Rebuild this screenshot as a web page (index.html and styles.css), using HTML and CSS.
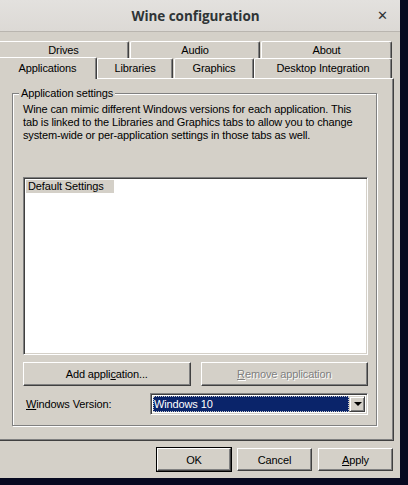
FILE: index.html
```html
<!DOCTYPE html>
<html>
<head>
<meta charset="utf-8">
<link rel="stylesheet" href="styles.css">
</head>
<body>
<div class="window">
  <div class="titlebar">
    <div class="spacer"></div>
    <div class="title">Wine configuration</div>
    <div class="spacer end"><span class="close">✕</span></div>
  </div>
  <div class="tabctl">
    <div class="tabrow row1">
      <div class="tab t-drives">Drives</div>
      <div class="tab t-audio">Audio</div>
      <div class="tab t-about">About</div>
    </div>
    <div class="tabrow row2">
      <div class="tab sel t-apps">Applications</div>
      <div class="tab t-libs">Libraries</div>
      <div class="tab t-gfx">Graphics</div>
      <div class="tab t-desk">Desktop Integration</div>
    </div>
    <div class="panel">
      <div class="group">
        <span class="legend">Application settings</span>
        <p class="desc">Wine can mimic different Windows versions for each application. This tab is linked to the Libraries and Graphics tabs to allow you to change system-wide or per-application settings in those tabs as well.</p>
        <div class="listbox">
          <div class="item">Default Settings</div>
        </div>
        <div class="btnrow">
          <div class="btn wide">Add appli<u>c</u>ation...</div>
          <div class="btn wide disabled"><span><u>R</u>emove application</span></div>
        </div>
        <div class="verrow">
          <span class="label"><u>W</u>indows Version:</span>
          <div class="combo">
            <div class="value"><span class="focus">Windows 10</span></div>
            <div class="drop"><span class="arrow"></span></div>
          </div>
        </div>
      </div>
    </div>
  </div>
  <div class="footer">
    <div class="btn ok">OK</div>
    <div class="btn">Cancel</div>
    <div class="btn"><u>A</u>pply</div>
  </div>
</div>
</body>
</html>
```
FILE: styles.css
```css
html, body {
  margin: 0;
  padding: 0;
}
body {
  width: 408px;
  height: 485px;
  overflow: hidden;
  background: #070920;
  font-family: "Liberation Sans", Arial, sans-serif;
  font-size: 11px;
  letter-spacing: -0.13px;
  color: #000;
}
.window {
  width: 400px;
  height: 478px;
  background: #d4d0c8;
  display: flex;
  flex-direction: column;
  overflow: hidden;
}
.titlebar {
  height: 31px;
  border-bottom: 1px solid #b9b5af;
  background: linear-gradient(#e3e1de, #dcd9d5);
  display: flex;
  align-items: center;
  padding-right: 9px;
  letter-spacing: 0;
}
.spacer {
  flex: 1;
  display: flex;
}
.spacer.end {
  justify-content: flex-end;
}
.title {
  font-family: "Open Sans", "Noto Sans", sans-serif;
  font-weight: bold;
  font-size: 13.5px;
  color: #2e3436;
  letter-spacing: -0.05px;
}
.close {
  font-family: "DejaVu Sans", sans-serif;
  font-weight: bold;
  font-size: 13px;
  color: #2e3436;
  margin-right: 3px;
}
.tabctl {
  margin-top: 9px;
  margin-left: -2px;
  width: 396px;
}
.tabrow {
  display: flex;
}
.row1 {
  height: 17px;
  gap: 1px;
}
.row2 {
  height: 20px;
  align-items: flex-end;
}
.tab {
  box-sizing: border-box;
  height: 17px;
  border-top: 1px solid #fff;
  border-left: 1px solid #fff;
  border-right: 1px solid #404040;
  box-shadow: inset -1px 0 #808080;
  border-radius: 2px 2px 0 0;
  display: flex;
  align-items: center;
  justify-content: center;
  padding-bottom: 1px;
}
.row2 .tab {
  height: 20px;
}
.tab.sel {
  height: 22px;
  margin-bottom: -1px;
  position: relative;
  z-index: 2;
  background: #d4d0c8;
  padding-bottom: 2px;
}
.t-drives { width: 131px; }
.t-audio { width: 130px; }
.t-about { width: 131px; }
.t-apps { width: 99px; }
.t-libs { width: 76px; margin-right: 1px; }
.t-gfx { width: 80px; }
.t-desk { width: 138px; }
.panel {
  box-sizing: border-box;
  height: 363px;
  border-top: 1px solid #fff;
  border-left: 1px solid #fff;
  border-right: 1px solid #404040;
  border-bottom: 1px solid #404040;
  box-shadow: inset -1px -1px #808080;
  padding: 14px 0 0 13px;
  position: relative;
  z-index: 1;
}
.group {
  box-sizing: border-box;
  width: 365px;
  height: 333px;
  border: 1px solid #808080;
  box-shadow: 1px 1px 0 #fff, inset 1px 1px 0 #fff;
  position: relative;
  padding: 9px 8px 0 10px;
}
.legend {
  position: absolute;
  left: 6px;
  top: -8px;
  background: #d4d0c8;
  padding: 0 2px;
  line-height: 14px;
}
.desc {
  margin: 0;
  padding-left: 0;
  line-height: 13px;
  height: 74px;
}
.listbox {
  box-sizing: border-box;
  height: 178px;
  background: #fff;
  border-top: 1px solid #808080;
  border-left: 1px solid #808080;
  border-right: 1px solid #fff;
  border-bottom: 1px solid #fff;
  box-shadow: inset 1px 1px #404040, inset -1px -1px #d4d0c8;
  padding: 2px 2px;
}
.item {
  display: inline-block;
  background: #d4d0c8;
  line-height: 13px;
  padding: 0 10px 0 2px;
}
.btnrow {
  display: flex;
  gap: 10px;
  margin-top: 7px;
}
.btn {
  box-sizing: border-box;
  width: 75px;
  height: 23px;
  border-top: 1px solid #fff;
  border-left: 1px solid #fff;
  border-right: 1px solid #404040;
  border-bottom: 1px solid #404040;
  box-shadow: inset -1px -1px #808080;
  display: flex;
  align-items: center;
  justify-content: center;
  background: #d4d0c8;
}
.btn.wide {
  width: 168px;
  height: 24px;
}
.btn.disabled span {
  color: #808080;
  text-shadow: 1px 1px 0 #fff;
}
.verrow {
  display: flex;
  align-items: center;
  margin-top: 7px;
  height: 22px;
}
.label {
  width: 124px;
  padding-left: 3px;
}
.combo {
  box-sizing: border-box;
  width: 218px;
  height: 22px;
  background: #fff;
  border-top: 1px solid #808080;
  border-left: 1px solid #808080;
  border-right: 1px solid #fff;
  border-bottom: 1px solid #fff;
  box-shadow: inset 1px 1px #404040, inset -1px -1px #d4d0c8;
  padding: 2px;
  display: flex;
}
.value {
  flex: 1;
  background: #0a246a;
  color: #fff;
  display: flex;
}
.focus {
  flex: 1;
  border: 1px dotted #c8c8c8;
  line-height: 14px;
}
.drop {
  box-sizing: border-box;
  width: 16px;
  border-top: 1px solid #d4d0c8;
  border-left: 1px solid #d4d0c8;
  border-right: 1px solid #404040;
  border-bottom: 1px solid #404040;
  box-shadow: inset 1px 1px #fff, inset -1px -1px #808080;
  background: #d4d0c8;
  display: flex;
  align-items: center;
  justify-content: center;
}
.arrow {
  width: 0;
  height: 0;
  border-left: 4px solid transparent;
  border-right: 4px solid transparent;
  border-top: 4px solid #000;
  margin-left: 1px;
}
.footer {
  display: flex;
  justify-content: flex-end;
  gap: 6px;
  padding: 7px 7px 0 0;
}
.btn.ok {
  width: 74px;
  outline: 1px solid #000;
}
u {
  text-decoration: underline;
  text-underline-offset: 1px;
}
```
